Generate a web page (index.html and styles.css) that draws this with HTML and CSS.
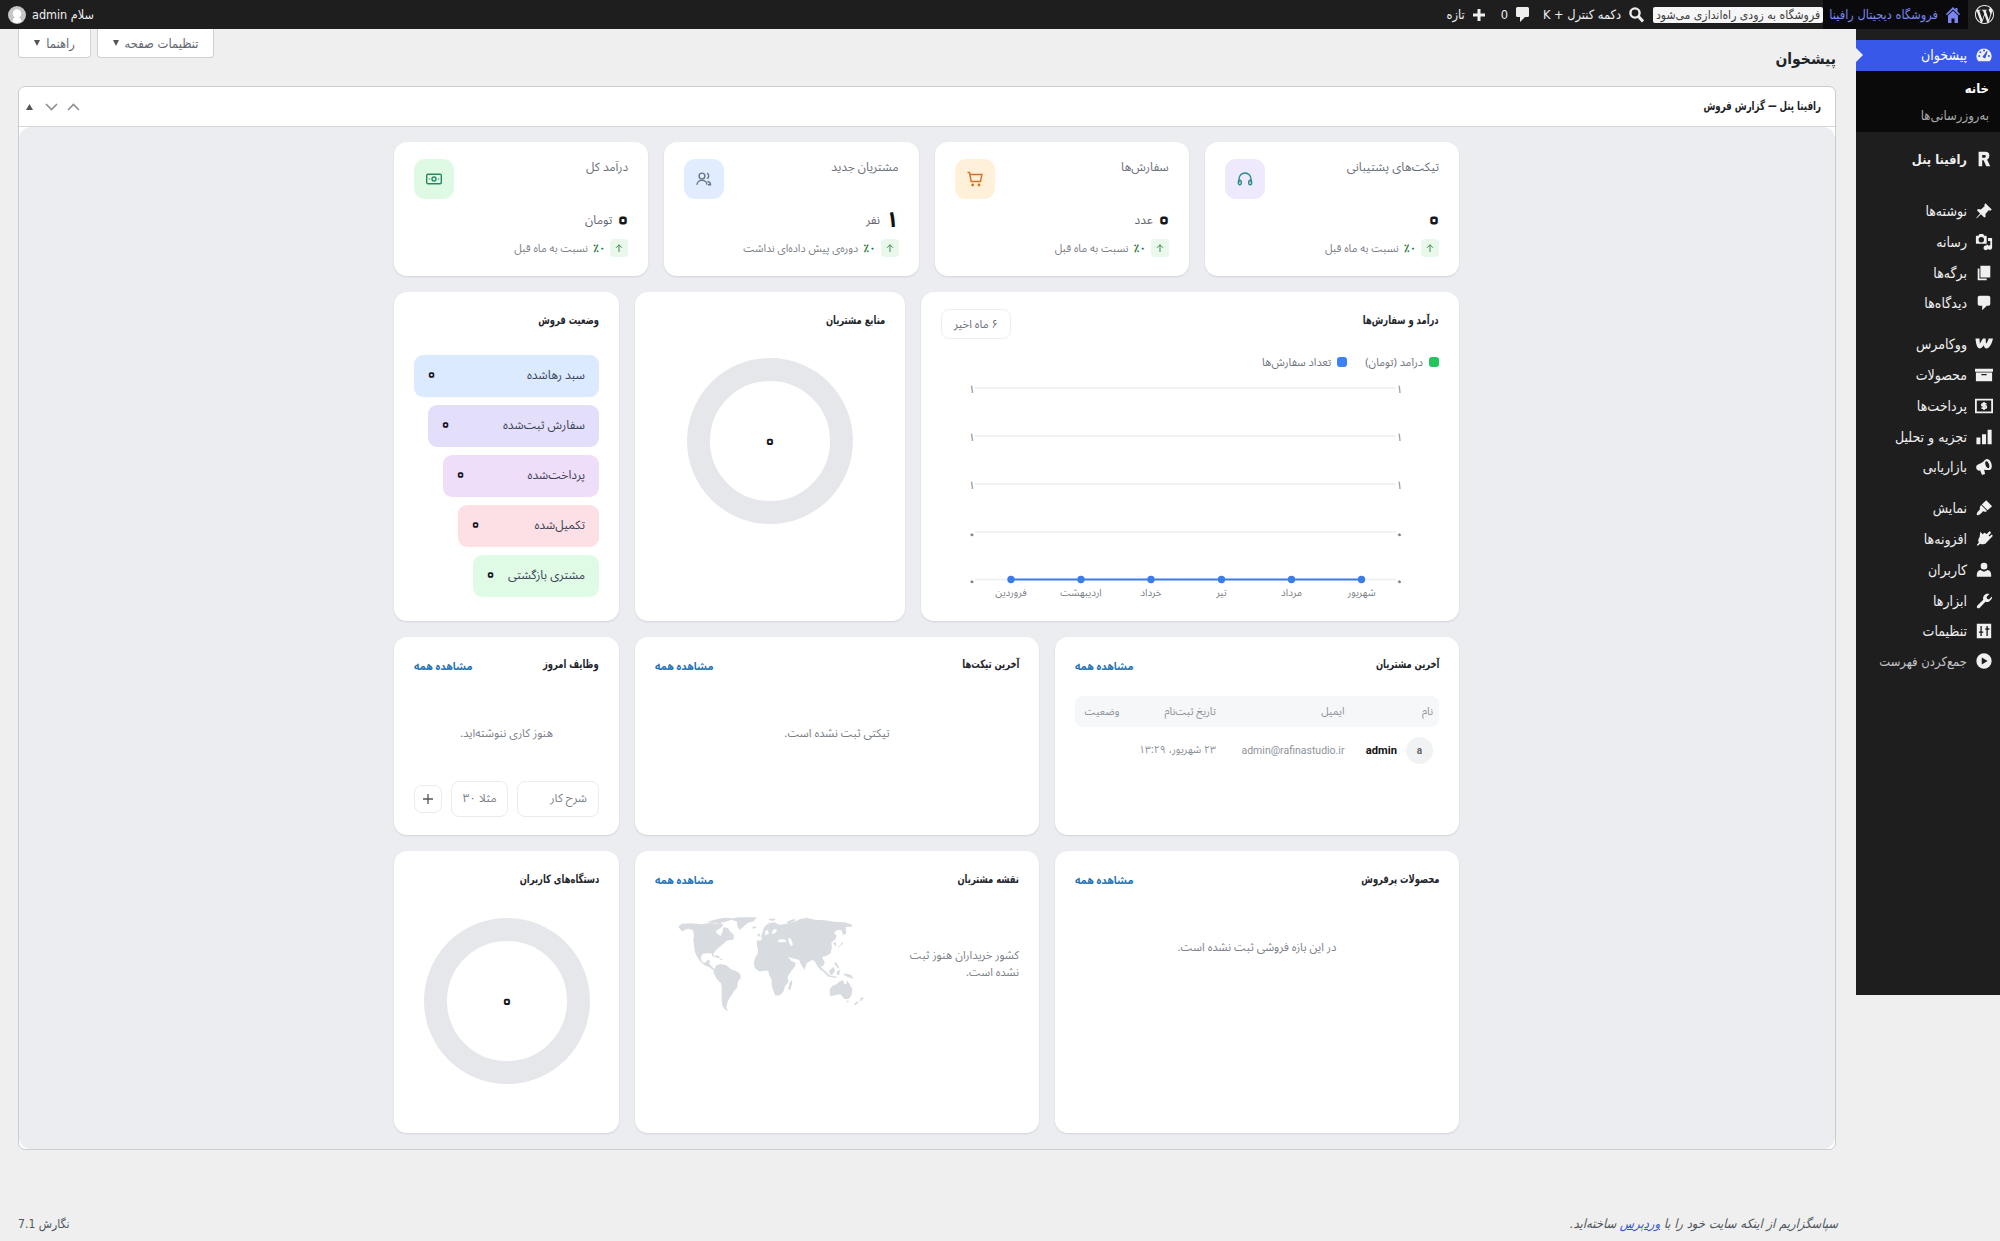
FILE: index.html
```html
<!DOCTYPE html>
<html lang="fa" dir="rtl">
<head>
<meta charset="utf-8">
<title>پیشخوان</title>
<link rel="stylesheet" href="styles.css">
</head>
<body>
<header class="bar">
  <span class="bar-logo"><svg width="19" height="19" viewBox="0 0 24 24" fill="#eee"><path d="M21.469 6.825c.84 1.537 1.318 3.3 1.318 5.175 0 3.979-2.156 7.456-5.363 9.325l3.295-9.527c.615-1.54.82-2.771.82-3.864 0-.405-.026-.78-.07-1.11m-7.981.105c.647-.03 1.232-.105 1.232-.105.582-.075.514-.93-.067-.899 0 0-1.755.135-2.88.135-1.064 0-2.85-.15-2.85-.15-.585-.03-.661.855-.075.885 0 0 .54.061 1.125.09l1.68 4.605-2.37 7.08L5.354 6.9c.649-.03 1.234-.1 1.234-.1.585-.075.516-.93-.065-.896 0 0-1.746.138-2.874.138-.2 0-.438-.008-.69-.015C4.911 3.15 8.235 1.215 12 1.215c2.809 0 5.365 1.072 7.286 2.833-.046-.003-.091-.009-.141-.009-1.06 0-1.812.923-1.812 1.914 0 .89.513 1.643 1.06 2.531.411.72.89 1.643.89 2.977 0 .915-.354 1.994-.821 3.479l-1.075 3.585-3.9-11.61.001.014zM12 22.784c-1.059 0-2.081-.153-3.048-.437l3.237-9.406 3.315 9.087c.024.053.05.101.078.149-1.12.393-2.325.609-3.582.609M1.211 12c0-1.564.336-3.05.935-4.39L7.29 21.709C3.694 19.96 1.212 16.271 1.211 12M12 0C5.385 0 0 5.385 0 12s5.385 12 12 12 12-5.385 12-12S18.615 0 12 0"/></svg></span>
  <span class="bar-site"><svg width="14" height="16" viewBox="0 0 14 16" fill="#7b85f0"><path d="M7 0 0 7l1 1.200 6-5.800 6 5.800L14 7l-2.500-2.500V1H9.500v1.500zM2 8.500V16h3.500v-4.500h3V16H12V8.500L7 3.800z"/></svg><span>فروشگاه دیجیتال رافینا</span></span>
  <span class="bar-soon">فروشگاه به زودی راه‌اندازی می‌شود</span>
  <span class="bar-item search"><svg width="15" height="16" viewBox="0 0 15 16" fill="none" stroke="#eee"><circle cx="6" cy="6" r="4.600" stroke-width="2.400"/><path d="m9.500 9.500 4.500 5" stroke-width="3"/></svg><span>دکمه کنترل + K</span></span>
  <span class="bar-item comments"><svg width="13" height="15" viewBox="0 0 13 15" fill="#eee"><path d="M1.500 0h10A1.500 1.500 0 0 1 13 1.500v7A1.500 1.500 0 0 1 11.500 10H9l-5 5v-5H1.500A1.500 1.500 0 0 1 0 8.500v-7A1.500 1.500 0 0 1 1.500 0z"/></svg><span>0</span></span>
  <span class="bar-item new"><svg width="12" height="12" viewBox="0 0 12 12" stroke="#eee" stroke-width="3"><path d="M6 0v12M0 6h12"/></svg><span>تازه</span></span>
  <span class="bar-user"><span>سلام admin</span><svg width="18" height="18" viewBox="0 0 18 18"><circle cx="9" cy="9" r="9" fill="#c6c6c6"/><circle cx="9" cy="7.500" r="4.300" fill="#fff"/><path d="M4.500 15.800c.3-3.600 2-4.800 4.500-4.800s4.200 1.200 4.500 4.800A9 9 0 0 1 4.500 15.800z" fill="#fff"/></svg></span>
</header>

<div class="shell">
<nav class="menu">
  <a class="mi active"><svg viewBox="0 0 20 20"><path d="M3.760 17h12.480A8.500 8.500 0 1 0 3.760 17z"/><path d="m9 12 4.500-6-2.500 7z" fill="#3858e9" stroke="#3858e9" stroke-width="1.200"/><g fill="#3858e9"><circle cx="10" cy="5" r="1.100"/><circle cx="6" cy="7" r="1.100"/><circle cx="4.700" cy="11" r="1.100"/><circle cx="15.500" cy="11" r="1.100"/></g></svg><span>پیشخوان</span></a>
  <div class="sub"><a class="on">خانه</a><a>به‌روزرسانی‌ها</a></div>
  <a class="mi brand"><svg viewBox="0 0 20 20"><path fill-rule="evenodd" d="M4 2h7.500q4.500 0 4.500 4.500 0 3.200-2.500 4.200L17 18h-4.500l-3-6.500H8V18H4zm4 3.500v3h2.700q1.300 0 1.300-1.500t-1.300-1.500z"/></svg><span>رافینا پنل</span></a>
  <a class="mi sep-lg"><svg viewBox="0 0 20 20"><path d="m10.400 3 1.200-1.600 7 7L17 9.600l-1.800-.3-3.600 4 .2 3.200-1.500.7-3.700-3.700L2 18l-.5-.5 4.200-4.800L2.300 9.400l.9-1.500 3.300.4 4.100-3.600z"/></svg><span>نوشته‌ها</span></a>
  <a class="mi"><svg viewBox="0 0 20 20"><path fill-rule="evenodd" d="M13 11V4c0-.600-.400-1-1-1h-1.700L9 1H5L3.700 3H2c-.600 0-1 .400-1 1v7c0 .600.400 1 1 1h10c.600 0 1-.400 1-1zM7 4.500a3 3 0 1 1 0 6 3 3 0 0 1 0-6z"/><path d="M14.500 5.500H19V16a2.500 2.500 0 1 1-2-2.400V9h-2.500v7.500a2.500 2.500 0 1 1-2-2.400V13h2z"/></svg><span>رسانه</span></a>
  <a class="mi"><svg viewBox="0 0 20 20"><path d="M6 15V2h11v13zM5 16h8v2H3V5h2z"/></svg><span>برگه‌ها</span></a>
  <a class="mi"><svg viewBox="0 0 20 20"><path d="M5 2h10q2 0 2 2v7q0 2-2 2h-2l-5 5v-5H5q-2 0-2-2V4q0-2 2-2z"/></svg><span>دیدگاه‌ها</span></a>
  <a class="mi sep"><svg viewBox="0 0 20 20"><path d="M.5 4H5l.3 5.800L8.800 4h3l.4 5.800C13.600 8.500 14.500 6 15.200 4H20c-1.200 5.500-3.800 11-7.200 11-1.800 0-2.700-1.800-3.100-3.700C8.500 13.300 7 15 5 15 1.800 15 1 8 .5 4z"/></svg><span>ووکامرس</span></a>
  <a class="mi"><svg viewBox="0 0 20 20"><path fill-rule="evenodd" d="M0 3h20v3.500H0zM1 7.300h18V17H1zM7 9v1.200h6V9z"/></svg><span>محصولات</span></a>
  <a class="mi"><svg viewBox="0 0 20 20"><path fill-rule="evenodd" d="M0 2h20v16H0zm2 2v12h16V4z"/><path d="M12.800 7.700H8.500q-1 0-1 1.100t1 1.100h3q1.200 0 1.200 1.200t-1.200 1.200H7.200M10 5.600v8.800" fill="none" stroke="#f0f0f1" stroke-width="1.800"/></svg><span>پرداخت‌ها</span></a>
  <a class="mi"><svg viewBox="0 0 20 20"><path d="M14 2h4.500v16H14zM7.800 7h4.500v11H7.800zM1.600 10.500H6V18H1.600z"/></svg><span>تجزیه و تحلیل</span></a>
  <a class="mi"><svg viewBox="0 0 20 20"><path fill-rule="evenodd" d="M18 5.500c1.300 3.500.7 6.900-1.500 7.700-1.900.7-4-.2-6.300-.1l1 4.700-3.400 1.200-2-5C4 14.500 2.500 13.800 1.600 12c-.8-2.300 0-4 1.700-4.700C7 6 9.300 4.500 11.300 2c2.200-2 5.400 0 6.700 3.500zm-2.900 5.800c1.200-.4 1.100-2.400.4-4.500-.8-2.100-2-3.600-3.200-3.100s-1.300 2.400-.5 4.400 2.100 3.600 3.300 3.200z"/></svg><span>بازاریابی</span></a>
  <a class="mi sep"><svg viewBox="0 0 20 20"><path d="M12.500 1.500 19 8l-5 4.500-6.500-6.500zM6.800 6.700l6.500 6.500c-1 1.200-2.800 1.300-4.500.5-1.300 1.800-4.300 5.300-6.300 4.300s1-5 3-6.300c-.5-2 0-3.800 1.300-5z"/></svg><span>نمایش</span></a>
  <a class="mi"><svg viewBox="0 0 20 20"><path d="M13.100 4.400 16 1.500q1.800.3 1.700 1.900l-2.600 2.800 1 1 2.500-2.300q1.400.6.900 2l-2.700 2.800-4.500 4.700c-2 1.900-4.500 1.900-6.400.8L3 17.500 2 16.700l2.300-2.900C3.200 12 3.500 9.500 5 8l1-6 2.500 2.800 2-1.700z"/></svg><span>افزونه‌ها</span></a>
  <a class="mi"><svg viewBox="0 0 20 20"><path d="M10 9.500A3.700 3.700 0 0 1 6.300 5.600a3.700 3.700 0 0 1 7.400 0A3.700 3.700 0 0 1 10 9.500zm-4 .5 4 2 4-2c2.500.5 4 2.300 4 5.500v2H2v-2c0-3.200 1.500-5 4-5.500z"/></svg><span>کاربران</span></a>
  <a class="mi"><svg viewBox="0 0 20 20"><path fill-rule="evenodd" d="M16.700 9.800c-1.600 1.600-3.300 1.700-5.100 1.100l-6.300 6.600c-.8.800-2 .9-2.700.2-.8-.8-.7-2 .1-2.800l6.500-6.300c-.6-1.800-.2-3.700 1.200-5.100 1.600-1.600 3.700-2 5.600-1.200l-3.200 3.200.6 2.100 2.100.6 3.300-3.200c.7 1.700-.7 3.400-2.100 4.800z"/></svg><span>ابزارها</span></a>
  <a class="mi"><svg viewBox="0 0 20 20"><path fill-rule="evenodd" d="M2 2h16v16H2zM6 4.500v6H4.300V12H6v3.500h1.500V12h1.700v-1.500H7.500v-6zm5.500 2.500v1.500h1.200v7h1.500v-7H16V7h-1.800V4.500h-1.500V7z"/></svg><span>تنظیمات</span></a>
  <a class="mi fold"><svg viewBox="0 0 20 20"><path fill-rule="evenodd" d="M10 1.500a8.500 8.500 0 1 1 0 17 8.500 8.500 0 0 1 0-17zM7.500 6v8l6.500-4z"/></svg><span>جمع‌کردن فهرست</span></a>
</nav>

<main class="main">
  <div class="top">
    <h1>پیشخوان</h1>
    <div class="tabs"><span class="tab screen">تنظیمات صفحه <i></i></span><span class="tab help">راهنما <i></i></span></div>
  </div>

  <section class="panel">
    <div class="panel-head">
      <h2>رافینا پنل — گزارش فروش</h2>
      <div class="handles">
        <svg width="13" height="8" viewBox="0 0 13 8"><path d="m1 7 5.500-5.500L12 7"/></svg>
        <svg width="13" height="8" viewBox="0 0 13 8"><path d="m1 1 5.500 5.500L12 1"/></svg>
        <svg class="tri" width="7" height="6" viewBox="0 0 7 6"><path d="M0 6 3.500 0 7 6z"/></svg>
      </div>
    </div>
    <div class="canvas">
      <div class="dash">
        <div class="row stats">
          <article class="card stat">
            <div class="stat-top"><span>تیکت‌های پشتیبانی</span><b class="ico violet"><svg viewBox="0 0 16 16" stroke="#2b8a8f"><path d="M2 11.500V8a6 6 0 0 1 12 0v3.500"/><ellipse cx="2.800" cy="11.500" rx="1.500" ry="2.300"/><ellipse cx="13.200" cy="11.500" rx="1.500" ry="2.300"/></svg></b></div>
            <div class="val"><svg class="zero" viewBox="0 0 10 10"><text x="5" y="12">۰</text></svg></div>
            <div class="chg"><i><svg viewBox="0 0 8 8"><path d="M4 8V.8M1 3.800l3-3 3 3"/></svg></i><strong>٪۰</strong><span>نسبت به ماه قبل</span></div>
          </article>
          <article class="card stat">
            <div class="stat-top"><span>سفارش‌ها</span><b class="ico amber"><svg viewBox="0 0 16 16" stroke="#d4702a"><path d="M.5 1.500h2l1.700 9h9.300l1.400-7H3"/><circle cx="5.700" cy="14" r=".7"/><circle cx="12" cy="14" r=".7"/></svg></b></div>
            <div class="val"><svg class="zero" viewBox="0 0 10 10"><text x="5" y="12">۰</text></svg><span>عدد</span></div>
            <div class="chg"><i><svg viewBox="0 0 8 8"><path d="M4 8V.8M1 3.800l3-3 3 3"/></svg></i><strong>٪۰</strong><span>نسبت به ماه قبل</span></div>
          </article>
          <article class="card stat">
            <div class="stat-top"><span>مشتریان جدید</span><b class="ico blue"><svg viewBox="0 0 16 16" stroke="#64748b"><circle cx="6" cy="5" r="2.900"/><path d="M1 13.800c0-6 10-6 10 0M11 2.200c2.300.8 2.300 4.600 0 5.500M11.500 10.500c2 .3 3 1.400 3 3.300H12"/></svg></b></div>
            <div class="val"><em class="one">۱</em><span>نفر</span></div>
            <div class="chg"><i><svg viewBox="0 0 8 8"><path d="M4 8V.8M1 3.800l3-3 3 3"/></svg></i><strong>٪۰</strong><span>دوره‌ی پیش داده‌ای نداشت</span></div>
          </article>
          <article class="card stat">
            <div class="stat-top"><span>درآمد کل</span><b class="ico green"><svg viewBox="0 0 16 16" stroke="#258a63"><rect x=".7" y="3.300" width="14.600" height="9.400" rx="1.200"/><circle cx="8" cy="8" r="2"/><path d="M3.500 7.500v1M12.500 7.500v1"/></svg></b></div>
            <div class="val"><svg class="zero" viewBox="0 0 10 10"><text x="5" y="12">۰</text></svg><span>تومان</span></div>
            <div class="chg"><i><svg viewBox="0 0 8 8"><path d="M4 8V.8M1 3.800l3-3 3 3"/></svg></i><strong>٪۰</strong><span>نسبت به ماه قبل</span></div>
          </article>
        </div>

        <div class="row mid">
          <article class="card">
            <div class="head"><h3>درآمد و سفارش‌ها</h3><span class="pill">۶ ماه اخیر</span></div>
            <div class="legend"><span><i class="g"></i>درآمد (تومان)</span><span><i class="b"></i>تعداد سفارش‌ها</span></div>
            <svg class="chart" width="500" height="230" viewBox="0 0 500 230">
              <g stroke="#eceef0" stroke-width="1.300"><path d="M36 14h421M36 62h421M36 110h421M36 158h421M36 205.500h421"/></g>
              <g class="tick"><text x="33" y="18.500">۱</text><text x="33" y="66.500">۱</text><text x="33" y="114.500">۱</text><text class="nil" x="33" y="163.500">۰</text><text class="nil" x="33" y="211">۰</text><text x="460.500" y="18.500">۱</text><text x="460.500" y="66.500">۱</text><text x="460.500" y="114.500">۱</text><text class="nil" x="460.500" y="163.500">۰</text><text class="nil" x="460.500" y="211">۰</text></g>
              <path d="M72 205.500h351" stroke="#3b7de8" stroke-width="2"/>
              <g fill="#3b7de8"><circle cx="72" cy="205.500" r="3.700"/><circle cx="142" cy="205.500" r="3.700"/><circle cx="212" cy="205.500" r="3.700"/><circle cx="282.500" cy="205.500" r="3.700"/><circle cx="352.500" cy="205.500" r="3.700"/><circle cx="422.500" cy="205.500" r="3.700"/></g>
              <g class="month"><text x="72" y="222">فروردین</text><text x="142" y="222">اردیبهشت</text><text x="212" y="222">خرداد</text><text x="282.500" y="222">تیر</text><text x="352.500" y="222">مرداد</text><text x="422.500" y="222">شهریور</text></g>
            </svg>
          </article>
          <article class="card">
            <div class="head"><h3>منابع مشتریان</h3></div>
            <div class="donut"><svg class="zero" viewBox="0 0 10 10"><text x="5" y="12">۰</text></svg></div>
          </article>
          <article class="card">
            <div class="head"><h3>وضعیت فروش</h3></div>
            <div class="funnel">
              <div class="f1"><span>سبد رهاشده</span><svg class="zero" viewBox="0 0 10 10"><text x="5" y="12">۰</text></svg></div>
              <div class="f2"><span>سفارش ثبت‌شده</span><svg class="zero" viewBox="0 0 10 10"><text x="5" y="12">۰</text></svg></div>
              <div class="f3"><span>پرداخت‌شده</span><svg class="zero" viewBox="0 0 10 10"><text x="5" y="12">۰</text></svg></div>
              <div class="f4"><span>تکمیل‌شده</span><svg class="zero" viewBox="0 0 10 10"><text x="5" y="12">۰</text></svg></div>
              <div class="f5"><span>مشتری بازگشتی</span><svg class="zero" viewBox="0 0 10 10"><text x="5" y="12">۰</text></svg></div>
            </div>
          </article>
        </div>

        <div class="row lists">
          <article class="card">
            <div class="head"><h3>آخرین مشتریان</h3><a>مشاهده همه</a></div>
            <div class="grid th"><span>نام</span><span>ایمیل</span><span>تاریخ ثبت‌نام</span><span>وضعیت</span></div>
            <div class="grid td"><span class="who"><i>a</i><b>admin</b></span><span dir="ltr" class="mail">admin@rafinastudio.ir</span><span>۲۳ شهریور، ۱۳:۲۹</span><span></span></div>
          </article>
          <article class="card">
            <div class="head"><h3>آخرین تیکت‌ها</h3><a>مشاهده همه</a></div>
            <p class="empty">تیکتی ثبت نشده است.</p>
          </article>
          <article class="card">
            <div class="head"><h3>وظایف امروز</h3><a>مشاهده همه</a></div>
            <p class="empty">هنوز کاری ننوشته‌اید.</p>
            <div class="todo"><span class="desc">شرح کار</span><span class="num">مثلا ۳۰</span><span class="add"><svg width="10" height="10" viewBox="0 0 10 10"><path d="M5 0v10M0 5h10" stroke="#555" stroke-width="1.300"/></svg></span></div>
          </article>
        </div>

        <div class="row lists last">
          <article class="card">
            <div class="head"><h3>محصولات پرفروش</h3><a>مشاهده همه</a></div>
            <p class="empty">در این بازه فروشی ثبت نشده است.</p>
          </article>
          <article class="card">
            <div class="head"><h3>نقشه مشتریان</h3><a>مشاهده همه</a></div>
            <div class="geo">
              <p>کشور خریداران هنوز ثبت نشده است.</p>
              <svg width="188" height="96" viewBox="172 230 564 288" fill="#d8dce1">
                <path d="m175 262 12-9 30-1 28 3 30-5 12 4 14-4 10 6-8 10-14 8 2 8 12 8 6-14 2-12 14 2 6 10 12 12-4 12-18 4-10 10-18 14-10 12-4 14-4-12-14 0-12 2-6 10 4 14 10 2 6-8 8 2-2 10 8 8 6 6 6 4-6 2-14-10-14-6-14-12-10-16-6-14-2-16-2-18 2-16-4-14-14-4-18 8z"/>
                <path d="m262 248 22-7 30-6 24 1-10 8-22 6-20 2zM326 240l30-6 55 0-8 12-18 4-14 12-10 10-8-12-2-14zM330 290l14 4-4 8-10-2zM398 262l10-1 2 5-10 2zM278 350l14-2 10 6-6 3zM300 358l8 0 0 4-8-1z"/>
                <path d="m290 378 12-4 18 4 14 12 16 6 12 8 1 12-8 10-3 20-10 10-6 12-10 14-4 12-2 12 6 8-8-2-10-12-2-24 0-30-2-14-12-12-10-18 2-12z"/>
                <path d="m416 326 20-6 14-1 4 6 14 6 14-2 12 2 10 28 8 12 16-2-2 12-14 18-8 14 2 16-10 12-4 14-10 12-14 3-6-12-6-20 0-16-8-16-2-12-14 0-12 3-14-10-4-14 4-18 8-12zM510 430l7-8 1 8-6 22-7-2z"/>
                <path d="m412 318-1-14 14-1 2-10 12-7 8-3-2-12-10 6-6-6 8-12 12-8 16-2 14 8 20-4 18-4 14-4 10-6 20-4 24 6 30 2 30 4 30 2 20 6 3 8-14-1-6 2 2 18-9 6-6-16-12 0-10 8 8 10-4 10-12 10 2 12-4 20-14 8-12 4 8 14-2 10-10 4 6 8-2 6-14-16-8-14-8-4-16 10-6 20-12-18-4-12-14-4-8-1-12-4 10 12 8 3-2 10-20 14-4-4-14-30-4-7 4-9-22-2-2-7-6 0 0 12-8-10-8-6-10 2-10 10z"/>
                <path fill="#fff" d="m472 306 10-7 14 2 4 6-14 2zM506 296l8 2 6 18-6 4-6-10zM456 284l12-4 4-8-8-4-6 8z"/>
                <path d="m428 282 2-10 8 10-6 10-10 1zM414 284l8-1-2 8-7 1zM448 238l22 0-10 7-12-3zM500 248l20-8 10 1-22 12zM640 312l8-4 2 14-8-8zM656 324l12-8 2-8-4 0-2 8-10 6zM604 384l26 24 22 4-2 4-24-4-24-24zM628 394l14-12 4 12-8 12-8-2zM644 368l8 4 8 16-6-2-8-10zM652 396l10-4-4 16-6-2zM672 402l22 4 8 12-18-5-10-5zM630 450l8-10 14-6 8-8 10-3 4 10 6 2 2-12 8 12 8 14-2 18-8 12-14 0-12-14-14 2-16 4-2-10zM680 484l8 0-4 7zM726 474l7 2-10 10-4-3zM712 486l6 2-10 9-6-1z"/>
              </svg>
            </div>
          </article>
          <article class="card">
            <div class="head"><h3>دستگاه‌های کاربران</h3></div>
            <div class="donut low"><svg class="zero" viewBox="0 0 10 10"><text x="5" y="12">۰</text></svg></div>
          </article>
        </div>
      </div>
    </div>
  </section>
  <footer class="foot"><span class="thanks">سپاسگزاریم از اینکه سایت خود را با <a>وردپرس</a> ساخته‌اید.</span><span>نگارش 7.1</span></footer>
</main>
</div>
</body>
</html>
```
FILE: styles.css
```css
*{box-sizing:border-box}
body{margin:0;width:2000px;height:1241px;overflow:hidden;background:#efefef;color:#3c434a;
  --ui:"DejaVu Sans Condensed","DejaVu Sans",sans-serif;
  --soft:Tahoma,"Noto Sans Arabic","Noto Naskh Arabic",Vazirmatn,"DejaVu Sans",sans-serif;
  font-family:var(--ui);font-size:12px;white-space:nowrap}
h1,h2,h3,p{margin:0}
em,i{font-style:normal}
svg{display:block;flex:none}

/* admin bar */
.bar{height:29px;background:#1e1e1e;color:#f0f0f1;display:flex;align-items:center;font-size:12.700px;padding-right:6px;padding-left:8px}
.bar>span{display:flex;align-items:center;height:29px}
.bar-logo{width:26px}
.bar .bar-site{width:145px;background:#0a0a0c;color:#7b85f0;gap:8px;padding-right:8px}
.bar .bar-soon{height:16px;width:170px;background:#f6f6f6;color:#3c3c3c;border-radius:2px;justify-content:center;font-size:12.100px}
.bar-item{gap:8px}
.search{margin-right:9px}
.comments{margin-right:14px}
.new{margin-right:16px}
.bar-user{margin-right:auto;gap:6px;font-size:12.500px}

/* side menu */
.shell{display:flex;align-items:flex-start}
.menu{width:144px;height:966px;background:#1e1e1e;padding-top:11px;flex:none}
.mi{display:flex;align-items:center;gap:8px;height:30.800px;padding-right:7px;color:#f0f0f1;font-size:14px}
.mi svg{width:18px;height:18px;fill:#f0f0f1}
.active{background:#3858e9;position:relative;color:#fff}
.active::after{content:"";position:absolute;left:0;top:8px;border:7px solid transparent;border-left-color:#efefef;border-right:0}
.sub{background:#0a0a0a;height:61px;padding:4px 11px 0 0;display:flex;flex-direction:column}
.sub a{height:27px;line-height:27px;color:#aaa;font-size:13px}
.sub .on{color:#fff;font-weight:bold}
.brand{margin-top:12px;font-weight:bold;font-size:12.800px}
.sep-lg{margin-top:21px}
.sep{margin-top:10px}
.mi.fold{color:#c3c4c7;font-size:12.900px;margin-top:-1px}

/* page frame */
.main{flex:1;padding:0 20px 0 18px;min-width:0}
.top{height:57px;display:flex;justify-content:space-between;align-items:flex-start}
h1{font-size:15.500px;color:#1d2327;line-height:60px}
.tabs{display:flex;gap:6px}
.tab{height:29px;background:#fff;border:1px solid #cfd1d4;border-top:0;border-radius:0 0 4px 4px;display:flex;align-items:center;justify-content:center;gap:6px;font-size:12.900px;color:#646970}
.tab i{border:3.500px solid transparent;border-top:6px solid #555;border-bottom:0}
.screen{width:117px}
.help{width:73px}
.panel{height:1064px;border:1px solid #c9ccd1;border-radius:7px;background:#fff}
.panel-head{height:40px;border-bottom:1px solid #d4d6d9;display:flex;align-items:center;justify-content:space-between;padding:0 14px 0 7px}
h2{font-size:12px;line-height:16px;margin-top:-2px;color:#1d2327;transform:scaleX(.8);transform-origin:right}
.handles{display:flex;align-items:center;gap:9px}
.handles path{fill:none;stroke:#8c8f94;stroke-width:1.600}
.handles .tri{margin-right:3px}
.handles .tri path{fill:#555;stroke:none}
.canvas{height:1022px;background:#ecedf1;border-radius:12px;padding:15px 376px 0}
.dash{width:1065px;display:flex;flex-direction:column;gap:16px;font-family:var(--soft)}

/* cards */
.row{display:grid;gap:16px}
.card{background:#fff;border-radius:13px;box-shadow:0 1px 2px rgba(20,30,50,.12);padding:17px 20px 0;min-width:0}
.stats{grid-template-columns:repeat(4,1fr);height:134px}
.mid{grid-template-columns:538px 270px 225px;height:329px}
.lists{grid-template-columns:404px 404px 225px;height:198px}
.last{height:282px}
.stat-top{display:flex;justify-content:space-between;align-items:flex-start;height:40px;color:#6b7078;font-size:12px}
.stat-top>span{line-height:17px}
.ico{width:40px;height:40px;border-radius:11px;display:flex;align-items:center;justify-content:center}
.ico svg{width:16px;height:16px;fill:none;stroke-width:1.400}
.violet{background:#eee9fd}.amber{background:#fff1d9}.blue{background:#e1edfe}.green{background:#defae5}
.val{height:24px;margin-top:9px;display:flex;align-items:center;gap:6px;color:#5f6470;font-size:12px}
.zero{width:10px;height:10px;overflow:visible}
.zero text{font:24px "DejaVu Sans";text-anchor:middle;fill:#fff;stroke:#15171c;stroke-width:5px;stroke-linejoin:round;paint-order:stroke}
.one{font:bold 22px/24px var(--soft);color:#0f1115}
.chg{display:flex;align-items:center;height:18px;margin-top:7px;gap:5px;color:#7b8088;font-size:10.800px}
.chg i{width:18px;height:18px;background:#eaf8ec;border-radius:4px;display:flex;align-items:center;justify-content:center}
.chg svg{width:8px;height:8px;fill:none;stroke:#3d8b4f}
.chg strong{color:#2c7a3c;font-size:11px}
.head{display:flex;justify-content:space-between;height:30px}
h3{font:bold 11.500px/22px "DejaVu Sans Condensed";color:#23262b;transform:scaleX(.81);transform-origin:right}
.pill{width:70px;height:30px;border:1px solid #eceef0;border-radius:8px;text-align:center;line-height:28px;font-size:11.300px;color:#6b7078}
.legend{display:flex;gap:18px;margin-top:14px;height:18px;color:#70757d;font-size:11px}
.legend span{display:flex;align-items:center;gap:6px}
.legend i{width:10px;height:10px;border-radius:3px}
.g{background:#22c55e}.b{background:#3b82f6}
.chart{margin-top:3px;direction:ltr}
.tick text,.month text{font-size:10px;fill:#7b8088;text-anchor:middle}
.tick text{font-size:11px}
.tick .nil{stroke:#7b8088;stroke-width:1.200px;stroke-linejoin:round}
.donut{width:166px;height:166px;border:23px solid #e6e7eb;border-radius:50%;margin:19px auto 0;display:flex;align-items:center;justify-content:center}
.donut .zero{width:8px;height:8px}
.low{margin-top:8px}
.funnel{display:flex;flex-direction:column;gap:8.500px;margin-top:16px}
.funnel div{height:41.500px;border-radius:9px;display:flex;align-items:center;justify-content:space-between;padding:0 14px;font-size:12px;color:#3a4356}
.funnel .zero{width:7px;height:7px}
.f1{background:#dbeafe;width:185px}.f1 text{fill:#dbeafe}
.f2{background:#e3defa;width:171px}.f2 text{fill:#e3defa}
.f3{background:#efdef9;width:156px}.f3 text{fill:#efdef9}
.f4{background:#fde0e5;width:141px}.f4 text{fill:#fde0e5}
.f5{background:#dffae5;width:126px}.f5 text{fill:#dffae5}

/* list cards */
.lists .head{height:42px}
.lists h3{line-height:20px}
.last .head:only-child,.last h3{line-height:22px}
.head a{font:bold 10.300px/26px var(--soft);color:#2271b1}
.grid{display:grid;grid-template-columns:88.500px 128.500px 96.500px 1fr;align-items:center;font-size:10.500px;color:#8d929a;padding-right:6px}
.th{height:31px;background:#f5f7f8;border-radius:8px}
.td{height:46px}
.who{display:flex;align-items:center;gap:9px}
.who i{width:27px;height:27px;border-radius:50%;background:#f1f2f4;text-align:center;font:bold 10px/27px Roboto;color:#666}
.who b{font:bold 11.200px Roboto;color:#111}
.mail{font:10.500px Roboto;text-align:right}
.empty{text-align:center;font-size:11.400px;color:#7b8088;margin-top:27px;line-height:20px}
.todo{display:flex;align-items:center;margin-top:38px;gap:9px}
.todo span{border:1px solid #e9ebee;border-radius:8px;height:36px;line-height:34px;font-size:11.700px;color:#7b8088}
.desc{width:82px;padding-right:11px}
.num{width:58px;text-align:center}
.todo .add{width:28px;height:28px;display:flex;align-items:center;justify-content:center}
.geo{display:flex;justify-content:space-between;padding-left:22px;margin-top:6px}
.geo p{width:115px;white-space:normal;font-size:11.300px;line-height:17px;color:#7b8088;padding-top:31px}
.geo svg{direction:ltr}

.foot{display:flex;justify-content:space-between;margin-top:64px;line-height:20px;font-size:12.100px;color:#50575e;margin-right:-2px}
.thanks{font-style:italic;font-size:12.900px}
.foot a{color:#3858c9;text-decoration:underline}
```
